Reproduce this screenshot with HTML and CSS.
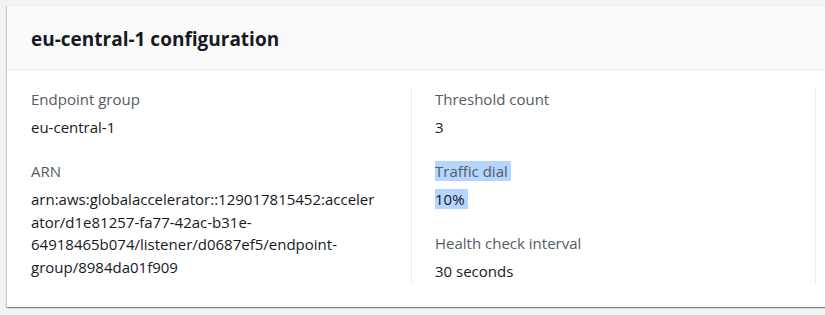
FILE: index.html
```html
<!DOCTYPE html>
<html>
<head>
<meta charset="utf-8">
<link rel="stylesheet" href="styles.css">
</head>
<body>
<div class="card">
  <div class="card-header"><h2 class="title">eu-central-1 configuration</h2></div>
  <div class="card-body">
    <div class="col">
      <div class="field">
        <div class="label">Endpoint group</div>
        <div class="value">eu-central-1</div>
      </div>
      <div class="field">
        <div class="label">ARN</div>
        <div class="value arn">arn:aws:globalaccelerator::129017815452:acceler<br>ator/d1e81257-fa77-42ac-b31e-<br>64918465b074/listener/d0687ef5/endpoint-<br>group/8984da01f909</div>
      </div>
    </div>
    <div class="col">
      <div class="field">
        <div class="label">Threshold count</div>
        <div class="value">3</div>
      </div>
      <div class="field">
        <div class="label"><span class="sel">Traffic dial</span></div>
        <div class="value"><span class="sel">10%</span></div>
      </div>
      <div class="field">
        <div class="label">Health check interval</div>
        <div class="value">30 seconds</div>
      </div>
    </div>
    <div class="col"></div>
  </div>
</div>
</body>
</html>
```
FILE: styles.css
```css
html, body {
  margin: 0;
  padding: 0;
  background: #f2f3f3;
}
body {
  padding: 5px 0 0 7px;
  font-family: "Open Sans", "Noto Sans", sans-serif;
  font-size: 15px;
  color: #16191f;
  overflow: hidden;
  height: 315px;
  box-sizing: border-box;
}
.card {
  width: 1000px;
  background: #fff;
  box-shadow: 0 1px 1px 0 rgba(0, 28, 36, 0.3), 1px 1px 1px 0 rgba(0, 28, 36, 0.15), -1px 1px 1px 0 rgba(0, 28, 36, 0.15);
  border-top: 1px solid #eaeded;
}
.card-header {
  background: #fafafa;
  border-bottom: 1px solid #eaeded;
  height: 63px;
  display: flex;
  align-items: center;
  padding-left: 24px;
}
.title {
  margin: 0;
  font-size: 19px;
  font-weight: 700;
  color: #16191f;
  line-height: 26px;
  padding-top: 2px;
}
.card-body {
  display: flex;
  padding: 18px 0 23px;
}
.col {
  width: 404px;
  box-sizing: border-box;
  padding: 0 23px 2px;
  border-left: 1px solid #eaeded;
  flex: none;
}
.col:first-child {
  border-left: none;
  padding-left: 24px;
}
.field {
  margin-bottom: 22px;
}
.field:last-child {
  margin-bottom: 0;
}
.label {
  color: #545b64;
  line-height: 22px;
  margin-bottom: 6px;
}
.value {
  line-height: 22px;
}
.arn {
  line-height: 22.7px;
}
.sel {
  background: #b4d5fe;
  padding-right: 3px;
}
```
